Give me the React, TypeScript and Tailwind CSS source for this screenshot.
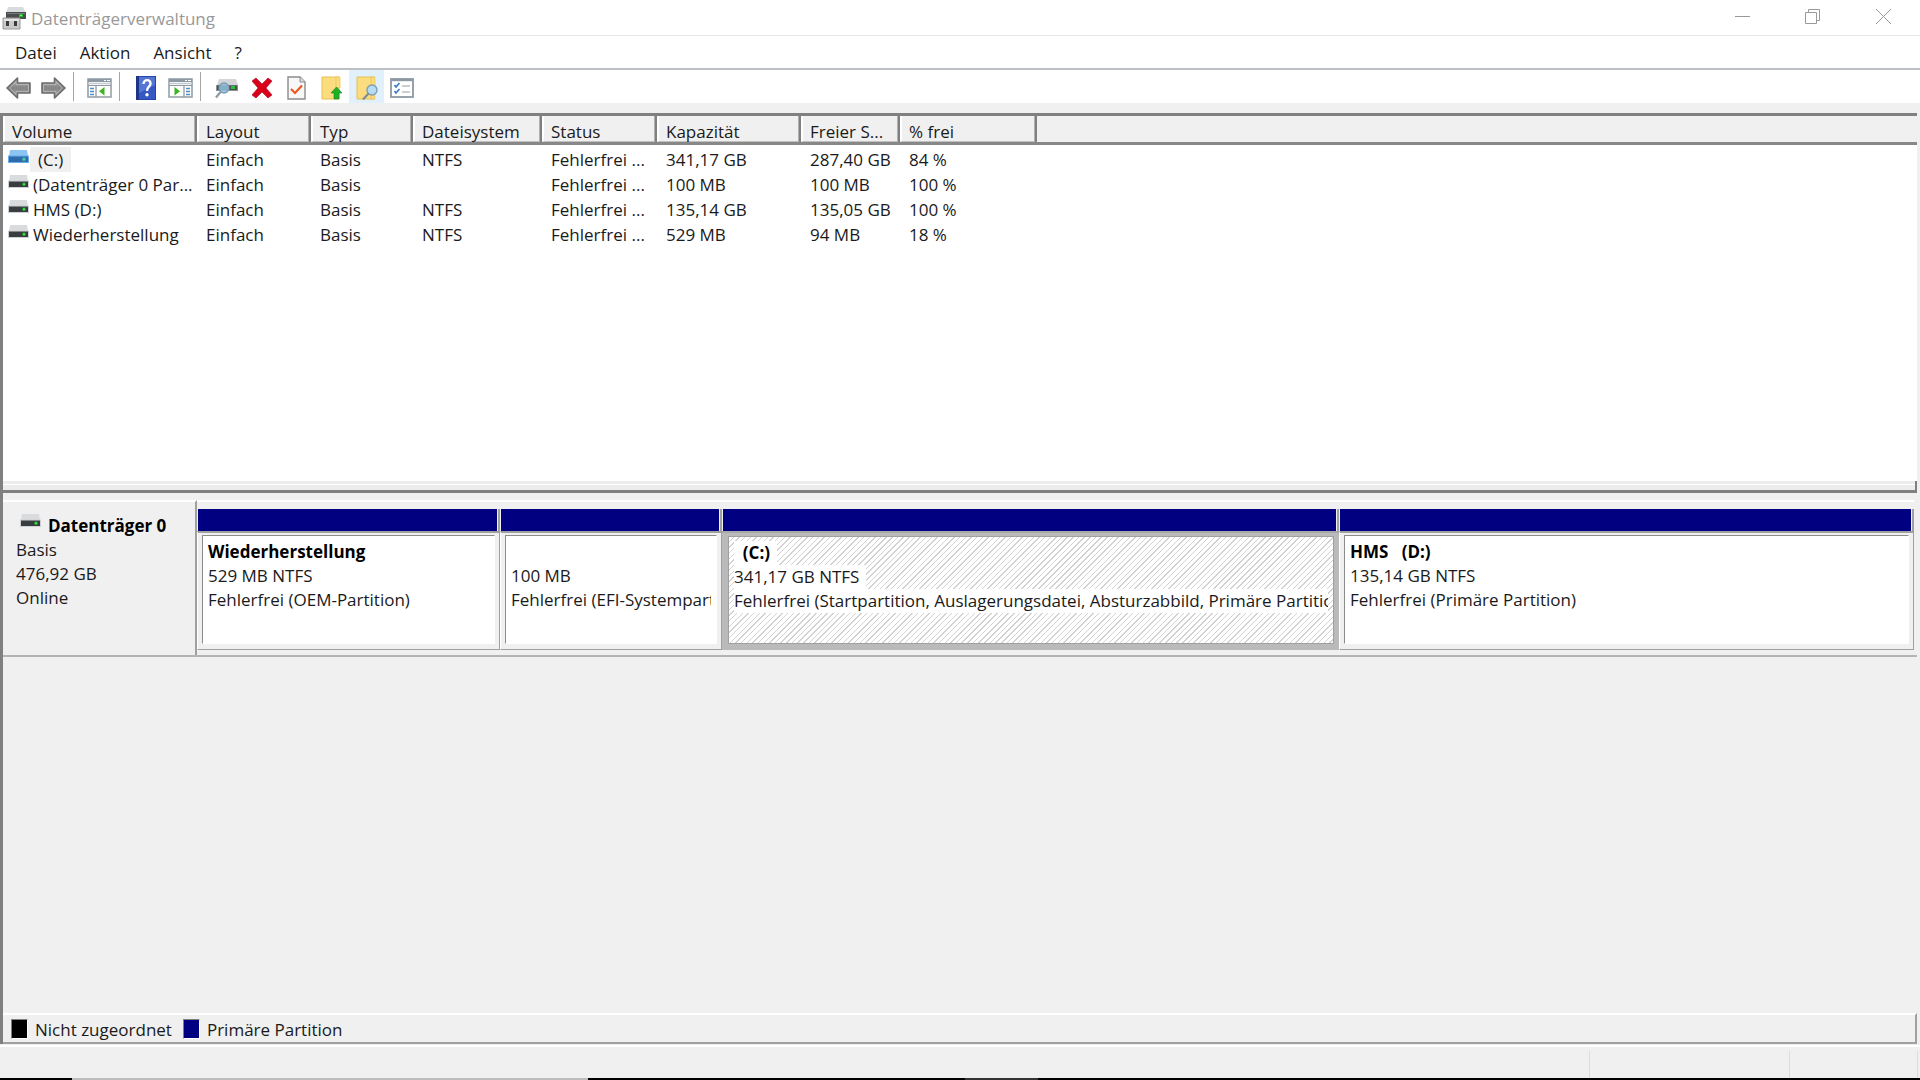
import React, { useState } from 'react';

interface Volume {
    name: string;
    layout: string;
    typ: string;
    dateisystem: string;
    status: string;
    kapazitaet: string;
    frei: string;
    prozent: string;
}

interface Partition {
    title: string;
    size: string;
    status: string;
    selected?: boolean;
}

const COLUMNS = ['Volume', 'Layout', 'Typ', 'Dateisystem', 'Status', 'Kapazität', 'Freier S...', '% frei'];

const VOLUMES: Volume[] = [
    { name: '(C:)', layout: 'Einfach', typ: 'Basis', dateisystem: 'NTFS', status: 'Fehlerfrei ...', kapazitaet: '341,17 GB', frei: '287,40 GB', prozent: '84 %' },
    { name: '(Datenträger 0 Par...', layout: 'Einfach', typ: 'Basis', dateisystem: '', status: 'Fehlerfrei ...', kapazitaet: '100 MB', frei: '100 MB', prozent: '100 %' },
    { name: 'HMS (D:)', layout: 'Einfach', typ: 'Basis', dateisystem: 'NTFS', status: 'Fehlerfrei ...', kapazitaet: '135,14 GB', frei: '135,05 GB', prozent: '100 %' },
    { name: 'Wiederherstellung', layout: 'Einfach', typ: 'Basis', dateisystem: 'NTFS', status: 'Fehlerfrei ...', kapazitaet: '529 MB', frei: '94 MB', prozent: '18 %' },
];

const PARTITIONS: Partition[] = [
    { title: 'Wiederherstellung', size: '529 MB NTFS', status: 'Fehlerfrei (OEM-Partition)' },
    { title: '', size: '100 MB', status: 'Fehlerfrei (EFI-Systempartition)' },
    { title: '  (C:)', size: '341,17 GB NTFS', status: 'Fehlerfrei (Startpartition, Auslagerungsdatei, Absturzabbild, Primäre Partition)', selected: true },
    { title: 'HMS   (D:)', size: '135,14 GB NTFS', status: 'Fehlerfrei (Primäre Partition)' },
];

const DiskIcon = ({ blue = false }: { blue?: boolean }) => (
    <svg width="21" height="14" viewBox="0 0 21 14" className="shrink-0">
        <path d="M2 0H19L20 6H1Z" fill={blue ? '#8cc4f4' : '#d9dbdd'} />
        <path d="M0 5.500H21V13H0Z" fill={blue ? '#69aeea' : '#ced1d4'} />
        <path d="M1 6.500H20V12H1Z" fill={blue ? '#2f6ba8' : '#3a3d40'} />
        <circle cx="16" cy="9.300" r="2" fill={blue ? '#3aa7a0' : '#1f8a2a'} />
        <circle cx="16" cy="9.300" r="1" fill={blue ? '#5fd0c0' : '#4dff55'} />
    </svg>
);

const AppIcon = () => (
    <svg width="24" height="24" viewBox="0 0 24 24">
        <path d="M6 1H21L24 7H4Z" fill="#d9dcde" />
        <path d="M4 6H24V13H4Z" fill="#4a4d50" />
        <path d="M5 7H23V8H5Z" fill="#777b7e" />
        <rect x="17" y="8" width="4" height="3" fill="#1fb52b" />
        <rect x="18" y="9" width="2" height="1" fill="#7dff7d" />
        <path d="M1 12H18V23H1Z" fill="#c9c9c9" stroke="#9a9a9a" />
        <path d="M2 13H17V15H2Z" fill="#e6e6e6" />
        <rect x="4" y="15" width="3" height="5" fill="#3a3a3a" />
        <rect x="12" y="15" width="3" height="5" fill="#3a3a3a" />
    </svg>
);

const ArrowIcon = ({ right = false }: { right?: boolean }) => (
    <svg width="25" height="22" viewBox="0 0 25 22" className={right ? '-scale-x-100' : ''}>
        <defs>
            <linearGradient id="arrow" x1="0" y1="0" x2="0" y2="1">
                <stop offset="0" stopColor="#b5b5b5" />
                <stop offset="0.5" stopColor="#858585" />
                <stop offset="1" stopColor="#a5a5a5" />
            </linearGradient>
        </defs>
        <path d="M1 11L11.500 1V6H24V16H11.500V21Z" fill="url(#arrow)" stroke="#6c6c6c" strokeWidth="1.600" strokeLinejoin="round" />
        <path d="M3.500 11L10 4.800V7.500H22.500V14.500H10V17.200Z" fill="none" stroke="#c4c4c4" strokeWidth="0.700" />
    </svg>
);

const PaneIcon = ({ right = false }: { right?: boolean }) => (
    <svg width="25" height="20" viewBox="0 0 25 20">
        <rect x="1" y="1" width="23" height="18" fill="#fff" stroke="#98a0a8" strokeWidth="1.600" />
        <path d="M1 1H24V4H1Z" fill="#8d98a5" />
        <path d="M17 2.500H19M20 2.500H23" stroke="#fff" />
        <path d="M1 5.500H24" stroke="#c4cad0" strokeWidth="1.500" />
        <path d="M1 7.500H24" stroke="#8e98a3" />
        {right ? (
            <>
                <path d="M16 7V19" stroke="#98a0a8" strokeWidth="1.400" />
                <path d="M18 10.500H22M18 13.500H22M18 16.500H22" stroke="#4c8cc8" strokeWidth="1.500" />
                <path d="M6.500 9L12 13.300L6.500 17.600Z" fill="#3cb521" />
            </>
        ) : (
            <>
                <path d="M9 7V19" stroke="#98a0a8" strokeWidth="1.400" />
                <path d="M3 10.500H7M3 13.500H7M3 16.500H7" stroke="#4c8cc8" strokeWidth="1.500" />
                <path d="M17.500 9L12 13.300L17.500 17.600Z" fill="#3cb521" />
            </>
        )}
    </svg>
);

const HelpIcon = () => (
    <svg width="20" height="24" viewBox="0 0 20 24">
        <rect width="20" height="24" fill="#2346a8" />
        <path d="M3 1H19V23H3Z" fill="#3558c4" />
        <path d="M3 1H19V9L3 17Z" fill="#5475d6" />
        <path d="M0 0H3V24H0Z" fill="#1c3585" />
        <path d="M7.500 8C7.500 2.800 15 3 14.500 7.800C14.200 10.500 11 11 11 15" fill="none" stroke="#fff" strokeWidth="2.400" />
        <circle cx="11" cy="18.800" r="1.700" fill="#fff" />
    </svg>
);

const DiskSearchIcon = () => (
    <svg width="24" height="22" viewBox="0 0 24 22">
        <path d="M4 2H21L23 8H2Z" fill="#d3d6d9" />
        <path d="M1 8H23V14H1Z" fill="#8b9095" />
        <path d="M2 8.500H22V13H2Z" fill="#4a4f54" />
        <rect x="16" y="9" width="4" height="3" fill="#1fc732" />
        <circle cx="9" cy="11" r="5" fill="#8fbfdd" fillOpacity="0.850" stroke="#7e99ad" strokeWidth="1.300" />
        <path d="M5.500 15L1 20.500" stroke="#8b9aa8" strokeWidth="2.200" />
    </svg>
);

const DeleteIcon = () => (
    <svg width="22" height="22" viewBox="0 0 22 22">
        <path d="M1 4L5 1L11 7L17 1L21 4L15 11L21 18L17 21L11 15L5 21L1 18L7 11Z" fill="#d9001b" stroke="#b00014" strokeWidth="0.600" />
    </svg>
);

const CheckDocIcon = () => (
    <svg width="19" height="24" viewBox="0 0 19 24">
        <path d="M1 1H13L18 6V23H1Z" fill="#f8f8f8" stroke="#8c8c8c" strokeWidth="1.400" />
        <path d="M13 1V6H18" fill="#ddd" stroke="#8c8c8c" />
        <path d="M4 13L8 17L15 9.500" fill="none" stroke="#f0561d" strokeWidth="2.200" />
    </svg>
);

const FolderUpIcon = () => (
    <svg width="22" height="24" viewBox="0 0 22 24">
        <path d="M1 1H18V23H1Z" fill="#fbdc7e" stroke="#e8c050" />
        <path d="M15 1H19V12H15Z" fill="#fbdc7e" stroke="#e8c050" strokeWidth="0.700" />
        <path d="M15.500 11L21 17H18V23H13V17H10Z" fill="#1fb025" stroke="#16861b" strokeWidth="0.600" />
    </svg>
);

const FolderSearchIcon = () => (
    <svg width="22" height="24" viewBox="0 0 22 24">
        <path d="M1 1H18V23H1Z" fill="#fbdc7e" stroke="#e8c050" />
        <path d="M15 1H19V23H15Z" fill="#fbdc7e" stroke="#e8c050" strokeWidth="0.700" />
        <circle cx="16" cy="14" r="5" fill="#b5dcf3" stroke="#7c9fb5" strokeWidth="1.400" />
        <path d="M12.500 17.500L7 23.500" stroke="#7d8d98" strokeWidth="2.200" />
    </svg>
);

const TaskListIcon = () => (
    <svg width="24" height="20" viewBox="0 0 24 20">
        <rect x="1" y="1" width="22" height="18" fill="#fff" stroke="#8d98a3" strokeWidth="1.800" />
        <path d="M1 2H23" stroke="#8d98a3" strokeWidth="2.400" />
        <path d="M4.500 7L6 9L9.500 5M4.500 13L6 15L9.500 11" fill="none" stroke="#3578c4" strokeWidth="1.600" />
        <path d="M12 8H20M12 14H20" stroke="#b8bec4" strokeWidth="1.500" />
    </svg>
);

const ToolButton = ({ label, active, children }: { label: string; active?: boolean; children: React.ReactNode }) => (
    <button type="button" aria-label={label} className={`flex h-full w-[35px] items-center justify-center pt-0.5 ${active ? 'bg-[#e0f0fc]' : 'hover:bg-[#e0f0fc]'}`}>
        {children}
    </button>
);

const Separator = () => <span className="mr-2 ml-0.5 h-[29px] w-px bg-[#a5a5a5]" />;

const PartitionBox = ({ partition, onSelect }: { partition: Partition; onSelect: () => void }) => (
    <button type="button" onClick={onSelect} className="flex min-w-0 flex-col text-left">
        <span className="flex h-[22px] w-full border-r-2 border-[#a0a0a0] pr-px">
            <span className="ml-px flex-1 bg-[#000080]" />
        </span>
        <span className={`flex w-full flex-1 border-t-2 ${partition.selected ? 'border-[#a8a8a8] bg-[#bababa] pt-[3px] pr-[5px] pb-[6px] pl-[6px]' : 'border-r border-b border-l border-[#a0a0a0] border-l-white bg-[#f0f0f0] pt-0.5 pr-1 pb-[5px] pl-1'}`}>
            <span className={`block min-w-0 flex-1 overflow-hidden border bg-white pr-[5px] pt-1 pl-[5px] leading-6 whitespace-pre ${partition.selected ? 'border-[#a0a0a0] bg-[repeating-linear-gradient(135deg,#fff_0px,#fff_3px,#d2d2d2_3px,#d2d2d2_4px)]' : 'border-t-[#8c8c8c] border-r-white border-b-white border-l-[#8c8c8c]'}`}>
                <span className="block h-6"><b className="inline-block bg-white pr-[7px] text-black">{partition.title}</b></span>
                <span className="block h-6"><span className="inline-block bg-white pr-[7px]">{partition.size}</span></span>
                <span className="block h-6 overflow-hidden bg-white">{partition.status}</span>
            </span>
        </span>
    </button>
);

const App = () => {
    const [selected, setSelected] = useState(2);

    return (
        <div className="flex h-screen flex-col overflow-hidden bg-[#f0f0f0] font-['Open_Sans',sans-serif] text-[17px] leading-6 text-[#1a1a1a]">
            {/* Title bar */}
            <header className="flex h-9 shrink-0 items-center border-b border-[#e6e6e6] bg-white pl-0.5 text-[#999]">
                <AppIcon />
                <h1 className="ml-[5px] flex-1 pt-0.5">Datenträgerverwaltung</h1>
                <button type="button" aria-label="Minimieren" className="flex h-full w-[70px] items-center justify-center pb-0.5">
                    <svg width="15" height="15" viewBox="0 0 15 15"><path d="M0 7.500H15" stroke="#999" /></svg>
                </button>
                <button type="button" aria-label="Verkleinern" className="flex h-full w-[70px] items-center justify-center pb-0.5">
                    <svg width="15" height="15" viewBox="0 0 15 15" fill="none" stroke="#999"><path d="M0.500 3.500H11.500V14.500H0.500ZM3.500 3V0.500H14.500V11.500H12" /></svg>
                </button>
                <button type="button" aria-label="Schließen" className="flex h-full w-[73px] items-center justify-center pb-0.5">
                    <svg width="15" height="15" viewBox="0 0 15 15"><path d="M0 0L15 15M15 0L0 15" stroke="#999" /></svg>
                </button>
            </header>

            {/* Menu */}
            <nav className="flex h-[34px] shrink-0 items-center gap-[23px] border-b-2 border-[#bcc0c4] bg-white pt-0.5 pl-[15px]">
                <button type="button">Datei</button>
                <button type="button">Aktion</button>
                <button type="button">Ansicht</button>
                <button type="button">?</button>
            </nav>

            {/* Toolbar */}
            <div className="flex h-[33px] shrink-0 items-center bg-white pl-px">
                <ToolButton label="Zurück"><ArrowIcon /></ToolButton>
                <ToolButton label="Vorwärts"><ArrowIcon right /></ToolButton>
                <Separator />
                <ToolButton label="Konsolenstruktur"><PaneIcon /></ToolButton>
                <Separator />
                <ToolButton label="Hilfe"><HelpIcon /></ToolButton>
                <ToolButton label="Aktionsbereich"><PaneIcon right /></ToolButton>
                <Separator />
                <ToolButton label="Aktualisieren"><DiskSearchIcon /></ToolButton>
                <ToolButton label="Löschen"><DeleteIcon /></ToolButton>
                <ToolButton label="Eigenschaften"><CheckDocIcon /></ToolButton>
                <ToolButton label="Öffnen"><FolderUpIcon /></ToolButton>
                <ToolButton label="Durchsuchen" active><FolderSearchIcon /></ToolButton>
                <ToolButton label="Aufgaben"><TaskListIcon /></ToolButton>
            </div>

            <main className="mt-2.5 mr-[3px] flex min-h-0 flex-1 flex-col border-t-[3px] border-l-[3px] border-[#808080]">
                {/* Volume list */}
                <section className="h-[365px] shrink-0 overflow-hidden bg-white">
                    <table className="w-full table-fixed border-collapse text-left whitespace-nowrap">
                        <colgroup>
                            <col className="w-[193px]" />
                            <col className="w-[114px]" />
                            <col className="w-[102px]" />
                            <col className="w-[129px]" />
                            <col className="w-[115px]" />
                            <col className="w-[144px]" />
                            <col className="w-[99px]" />
                            <col className="w-[137px]" />
                            <col />
                        </colgroup>
                        <thead>
                            <tr className="border-b-[3px] border-[#888] bg-[#f0f0f0]">
                                {COLUMNS.map((column) => (
                                    <th key={column} className="border-r-2 border-[#808080] p-0 font-normal">
                                        <span className="block border-r border-b border-l-2 border-r-[#b0b0b0] border-b-[#c0c0c0] border-l-white pt-[6px] pl-[7px] leading-[19px]">{column}</span>
                                    </th>
                                ))}
                                <th aria-label="Leer" />
                            </tr>
                        </thead>
                        <tbody className="before:block before:h-0.5">
                            {VOLUMES.map((volume, i) => (
                                <tr key={volume.name} className="h-[25px] leading-[25px]">
                                    <td className="p-0">
                                        <span className="flex pl-[5px]">
                                            <span className="pt-[3px]"><DiskIcon blue={i === 0} /></span>
                                            <span className={i === 0 ? 'ml-px bg-[#f0f0f0] px-2' : 'ml-1'}>{volume.name}</span>
                                        </span>
                                    </td>
                                    <td className="p-0 pl-2.5">{volume.layout}</td>
                                    <td className="p-0 pl-2.5">{volume.typ}</td>
                                    <td className="p-0 pl-2.5">{volume.dateisystem}</td>
                                    <td className="p-0 pl-2.5">{volume.status}</td>
                                    <td className="p-0 pl-2.5">{volume.kapazitaet}</td>
                                    <td className="p-0 pl-2.5">{volume.frei}</td>
                                    <td className="p-0 pl-2.5">{volume.prozent}</td>
                                    <td />
                                </tr>
                            ))}
                        </tbody>
                    </table>
                </section>

                {/* Splitter */}
                <div className="h-3 shrink-0 border-r-2 border-b-[3px] border-[#808080] bg-[#ececec] pt-[3px]">
                    <div className="h-px bg-white" />
                </div>

                {/* Disk map */}
                <section className="mt-[7px] flex h-[157px] shrink-0 border-b-2 border-[#b4b4b4]">
                    <div className="w-[194px] shrink-0 border-t-2 border-r-2 border-t-white border-r-[#a0a0a0] pt-3 pl-[13px]">
                        <h2 className="flex font-bold text-black"><span className="mr-[7px] ml-1"><DiskIcon /></span>Datenträger 0</h2>
                        <p>Basis</p>
                        <p>476,92 GB</p>
                        <p>Online</p>
                    </div>
                    <div className="mr-[3px] mb-[5px] grid flex-1 grid-cols-[303fr_222fr_617fr_575fr] border-t-2 border-white pt-[7px]">
                        {PARTITIONS.map((partition, i) => (
                            <PartitionBox key={partition.status} partition={{ ...partition, selected: i === selected }} onSelect={() => setSelected(i)} />
                        ))}
                    </div>
                </section>

                <div className="flex-1" />

                {/* Legend */}
                <footer className="flex h-[31px] shrink-0 items-center border-t-2 border-r-2 border-b-2 border-t-white border-r-[#a0a0a0] border-b-[#a0a0a0] pl-2">
                    <span className="h-5 w-[17px] border border-t-[#808080] border-r-white border-b-white border-l-[#808080] bg-black" />
                    <span className="ml-[7px] pt-0.5">Nicht zugeordnet</span>
                    <span className="ml-[11px] h-5 w-[17px] border border-t-[#808080] border-r-white border-b-white border-l-[#808080] bg-[#000080]" />
                    <span className="ml-[7px] pt-0.5">Primäre Partition</span>
                </footer>
            </main>

            {/* Status bar */}
            <div className="mt-px flex h-[33px] shrink-0 justify-end border-t-2 border-white pt-1">
                <div className="w-[200px] border-l border-[#dcdcdc]" />
                <div className="w-[128px] border-l border-[#dcdcdc]" />
                <div className="w-[3px] border-l border-[#dcdcdc]" />
            </div>
            <div className="flex h-0.5 shrink-0 bg-black">
                <div className="ml-[72px] w-[516px] bg-[#bdbdbd]" />
                <div className="ml-[377px] w-[73px] bg-[#333]" />
            </div>
        </div>
    );
};

export default App;
